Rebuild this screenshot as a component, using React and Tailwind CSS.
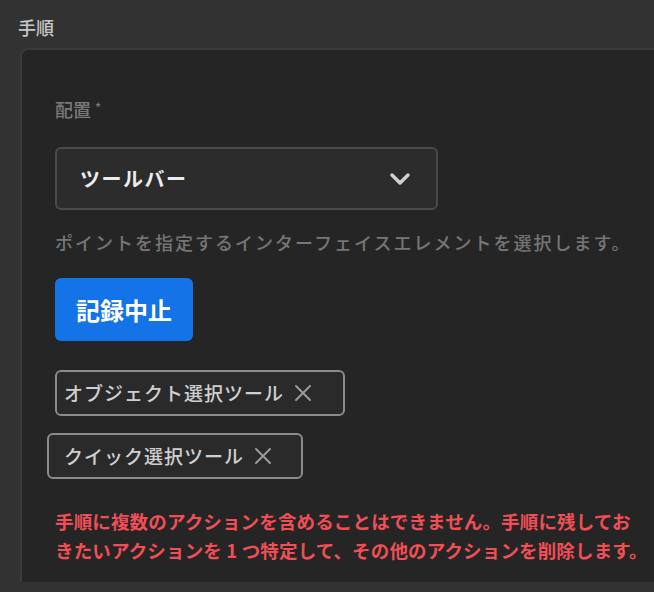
import React from 'react';

const CloseIcon = () => (
    <svg width="18" height="18" viewBox="0 0 18 18" fill="none" className="ml-[10px]">
        <path d="M2 2l14 14M16 2L2 16" stroke="#9a9a9a" strokeWidth="2" strokeLinecap="round" />
    </svg>
);

const Tag = ({ label, className = '' }) => (
    <div className={`inline-flex items-center h-[46px] rounded-md border-2 border-[#8c8c8c] bg-[#2a2a2a] text-[19px] font-medium tracking-[1px] text-[#cfcfcf] ${className}`}>
        {label}
        <CloseIcon />
    </div>
);

const App = () => {
    return (
        <div className="w-[654px] h-[592px] bg-[#323232] overflow-hidden font-['Noto_Sans_CJK_JP',sans-serif]">
            <div className="pt-[14px] pl-[18px] text-[18px] font-medium text-[#c8c8c8] leading-[26px]">手順</div>
            <div className="mt-[8px] ml-[20px] h-[534px] bg-[#252525] border-l-2 border-t-2 border-[#3a3a3a] rounded-tl-lg pl-[33px] pt-[46px]">
                <div className="text-[18px] text-[#7a7a7a] font-medium leading-[26px]">
                    配置 <span className="text-[13px] relative -top-[4px]">*</span>
                </div>
                <div className="mt-[22px] w-[383px] h-[63px] rounded-md border-2 border-[#4a4a4a] bg-[#2c2c2c] flex items-center justify-between pl-[23px] pr-[25px]">
                    <span className="text-[20px] font-bold tracking-[1.5px] text-[#ececec]">ツールバー</span>
                    <svg width="22" height="14" viewBox="0 0 22 14" fill="none">
                        <path d="M3 3l8 8 8-8" stroke="#cfcfcf" strokeWidth="3.5" strokeLinecap="round" strokeLinejoin="round" />
                    </svg>
                </div>
                <p className="mt-[18px] text-[18px] text-[#767676] font-medium tracking-[2px] leading-[28px] whitespace-nowrap">
                    ポイントを指定するインターフェイスエレメントを選択します。
                </p>
                <button className="mt-[22px] w-[138px] h-[63px] rounded-md bg-[#1473e6] text-white text-[24px] font-bold">
                    記録中止
                </button>
                <div className="mt-[29px] flex flex-col items-start gap-[17px]">
                    <Tag label="オブジェクト選択ツール" className="w-[290px] pl-[7px]" />
                    <Tag label="クイック選択ツール" className="w-[256px] -ml-[8px] pl-[15px]" />
                </div>
                <p className="mt-[28px] text-[18.5px] text-[#ef4f55] font-bold tracking-[0.15px] leading-[29px] whitespace-nowrap">
                    手順に複数のアクションを含めることはできません。手順に残してお
                    <br />
                    きたいアクションを 1 つ特定して、その他のアクションを削除します。
                </p>
            </div>
        </div>
    );
};

export default App;
